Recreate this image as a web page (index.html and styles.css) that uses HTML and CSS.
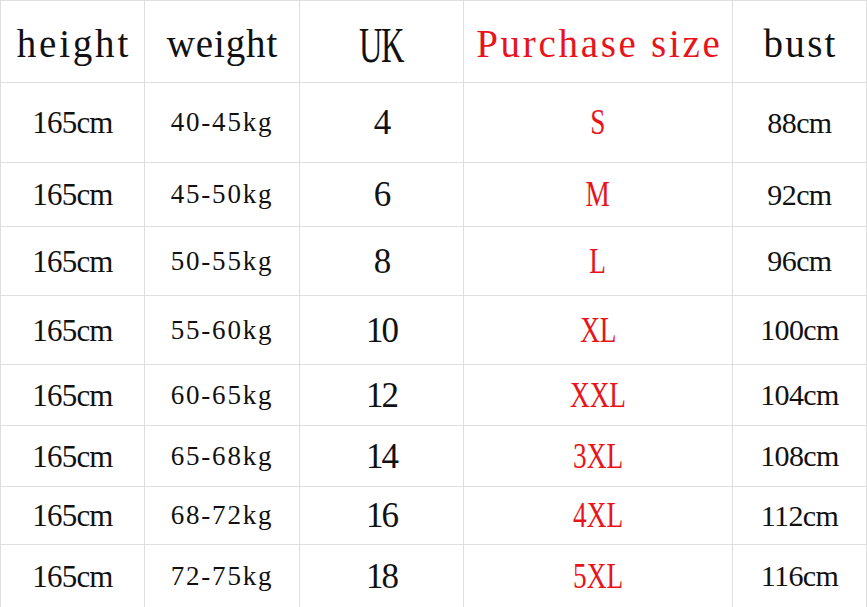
FILE: index.html
```html
<!DOCTYPE html>
<html lang="en">
<head>
<meta charset="utf-8">
<title>Size chart</title>
<link rel="stylesheet" href="styles.css">
</head>
<body>
<div class="chart">
  <div class="cell head c-height"><span>height</span></div>
  <div class="cell head c-weight"><span>weight</span></div>
  <div class="cell head c-uk"><span class="narrow">UK</span></div>
  <div class="cell head c-size"><span>Purchase size</span></div>
  <div class="cell head c-bust"><span>bust</span></div>

  <div class="cell c-height"><span>165cm</span></div>
  <div class="cell c-weight"><span>40-45kg</span></div>
  <div class="cell c-uk"><span>4</span></div>
  <div class="cell c-size"><span class="narrow">S</span></div>
  <div class="cell c-bust"><span>88cm</span></div>

  <div class="cell c-height"><span>165cm</span></div>
  <div class="cell c-weight"><span>45-50kg</span></div>
  <div class="cell c-uk"><span>6</span></div>
  <div class="cell c-size"><span class="narrow">M</span></div>
  <div class="cell c-bust"><span>92cm</span></div>

  <div class="cell c-height"><span>165cm</span></div>
  <div class="cell c-weight"><span>50-55kg</span></div>
  <div class="cell c-uk"><span>8</span></div>
  <div class="cell c-size"><span class="narrow">L</span></div>
  <div class="cell c-bust"><span>96cm</span></div>

  <div class="cell c-height"><span>165cm</span></div>
  <div class="cell c-weight"><span>55-60kg</span></div>
  <div class="cell c-uk"><span>10</span></div>
  <div class="cell c-size"><span class="narrow">XL</span></div>
  <div class="cell c-bust"><span>100cm</span></div>

  <div class="cell c-height"><span>165cm</span></div>
  <div class="cell c-weight"><span>60-65kg</span></div>
  <div class="cell c-uk"><span>12</span></div>
  <div class="cell c-size"><span class="narrow">XXL</span></div>
  <div class="cell c-bust"><span>104cm</span></div>

  <div class="cell c-height"><span>165cm</span></div>
  <div class="cell c-weight"><span>65-68kg</span></div>
  <div class="cell c-uk"><span>14</span></div>
  <div class="cell c-size"><span class="narrow">3XL</span></div>
  <div class="cell c-bust"><span>108cm</span></div>

  <div class="cell c-height"><span>165cm</span></div>
  <div class="cell c-weight"><span>68-72kg</span></div>
  <div class="cell c-uk"><span>16</span></div>
  <div class="cell c-size"><span class="narrow">4XL</span></div>
  <div class="cell c-bust"><span>112cm</span></div>

  <div class="cell c-height"><span>165cm</span></div>
  <div class="cell c-weight"><span>72-75kg</span></div>
  <div class="cell c-uk"><span>18</span></div>
  <div class="cell c-size"><span class="narrow">5XL</span></div>
  <div class="cell c-bust"><span>116cm</span></div>
</div>
</body>
</html>
```

FILE: styles.css
```css
* { box-sizing: border-box; }

html, body {
  margin: 0;
  padding: 0;
  background: #ffffff;
}

body {
  width: 867px;
  height: 607px;
  overflow: hidden;
  font-family: "Liberation Serif", "Times New Roman", serif;
  color: #111111;
}

.chart {
  display: grid;
  grid-template-columns: 145px 155px 164px 269px 134px;
  grid-template-rows: 82px 80px 64px 69px 69px 61px 61px 58px 63px;
  border-top: 1px solid #dedede;
}

.cell {
  display: flex;
  align-items: center;
  justify-content: center;
  border-right: 1px solid #dedede;
  border-bottom: 1px solid #dedede;
  white-space: nowrap;
  line-height: 1;
}

.cell:nth-child(5n+1) {
  border-left: 1px solid #dedede;
}

.narrow {
  display: inline-block;
  transform: scaleX(0.78);
}

/* body columns */
.c-height {
  font-size: 31px;
  letter-spacing: -0.8px;
}
.c-weight {
  font-size: 27px;
  letter-spacing: 1.8px;
}
.c-uk {
  font-size: 35px;
  letter-spacing: -2px;
}
.c-size {
  font-size: 35px;
  color: #e8141b;
}
.c-bust {
  font-size: 30px;
  letter-spacing: -0.6px;
}

/* header row */
.chart .head {
  font-size: 39px;
  padding-top: 4px;
}
.chart .head.c-height span { letter-spacing: 2.8px; margin-right: -2.8px; }
.chart .head.c-weight span { letter-spacing: 0.9px; margin-right: -0.9px; }
.chart .head.c-bust span { letter-spacing: 2.3px; margin-right: -2.3px; }
.chart .head.c-size span { letter-spacing: 2.7px; margin-right: -2.7px; }
.chart .head.c-uk { font-size: 50px; padding-top: 6px; }
.chart .head.c-uk .narrow { transform: scaleX(0.65); }
```
